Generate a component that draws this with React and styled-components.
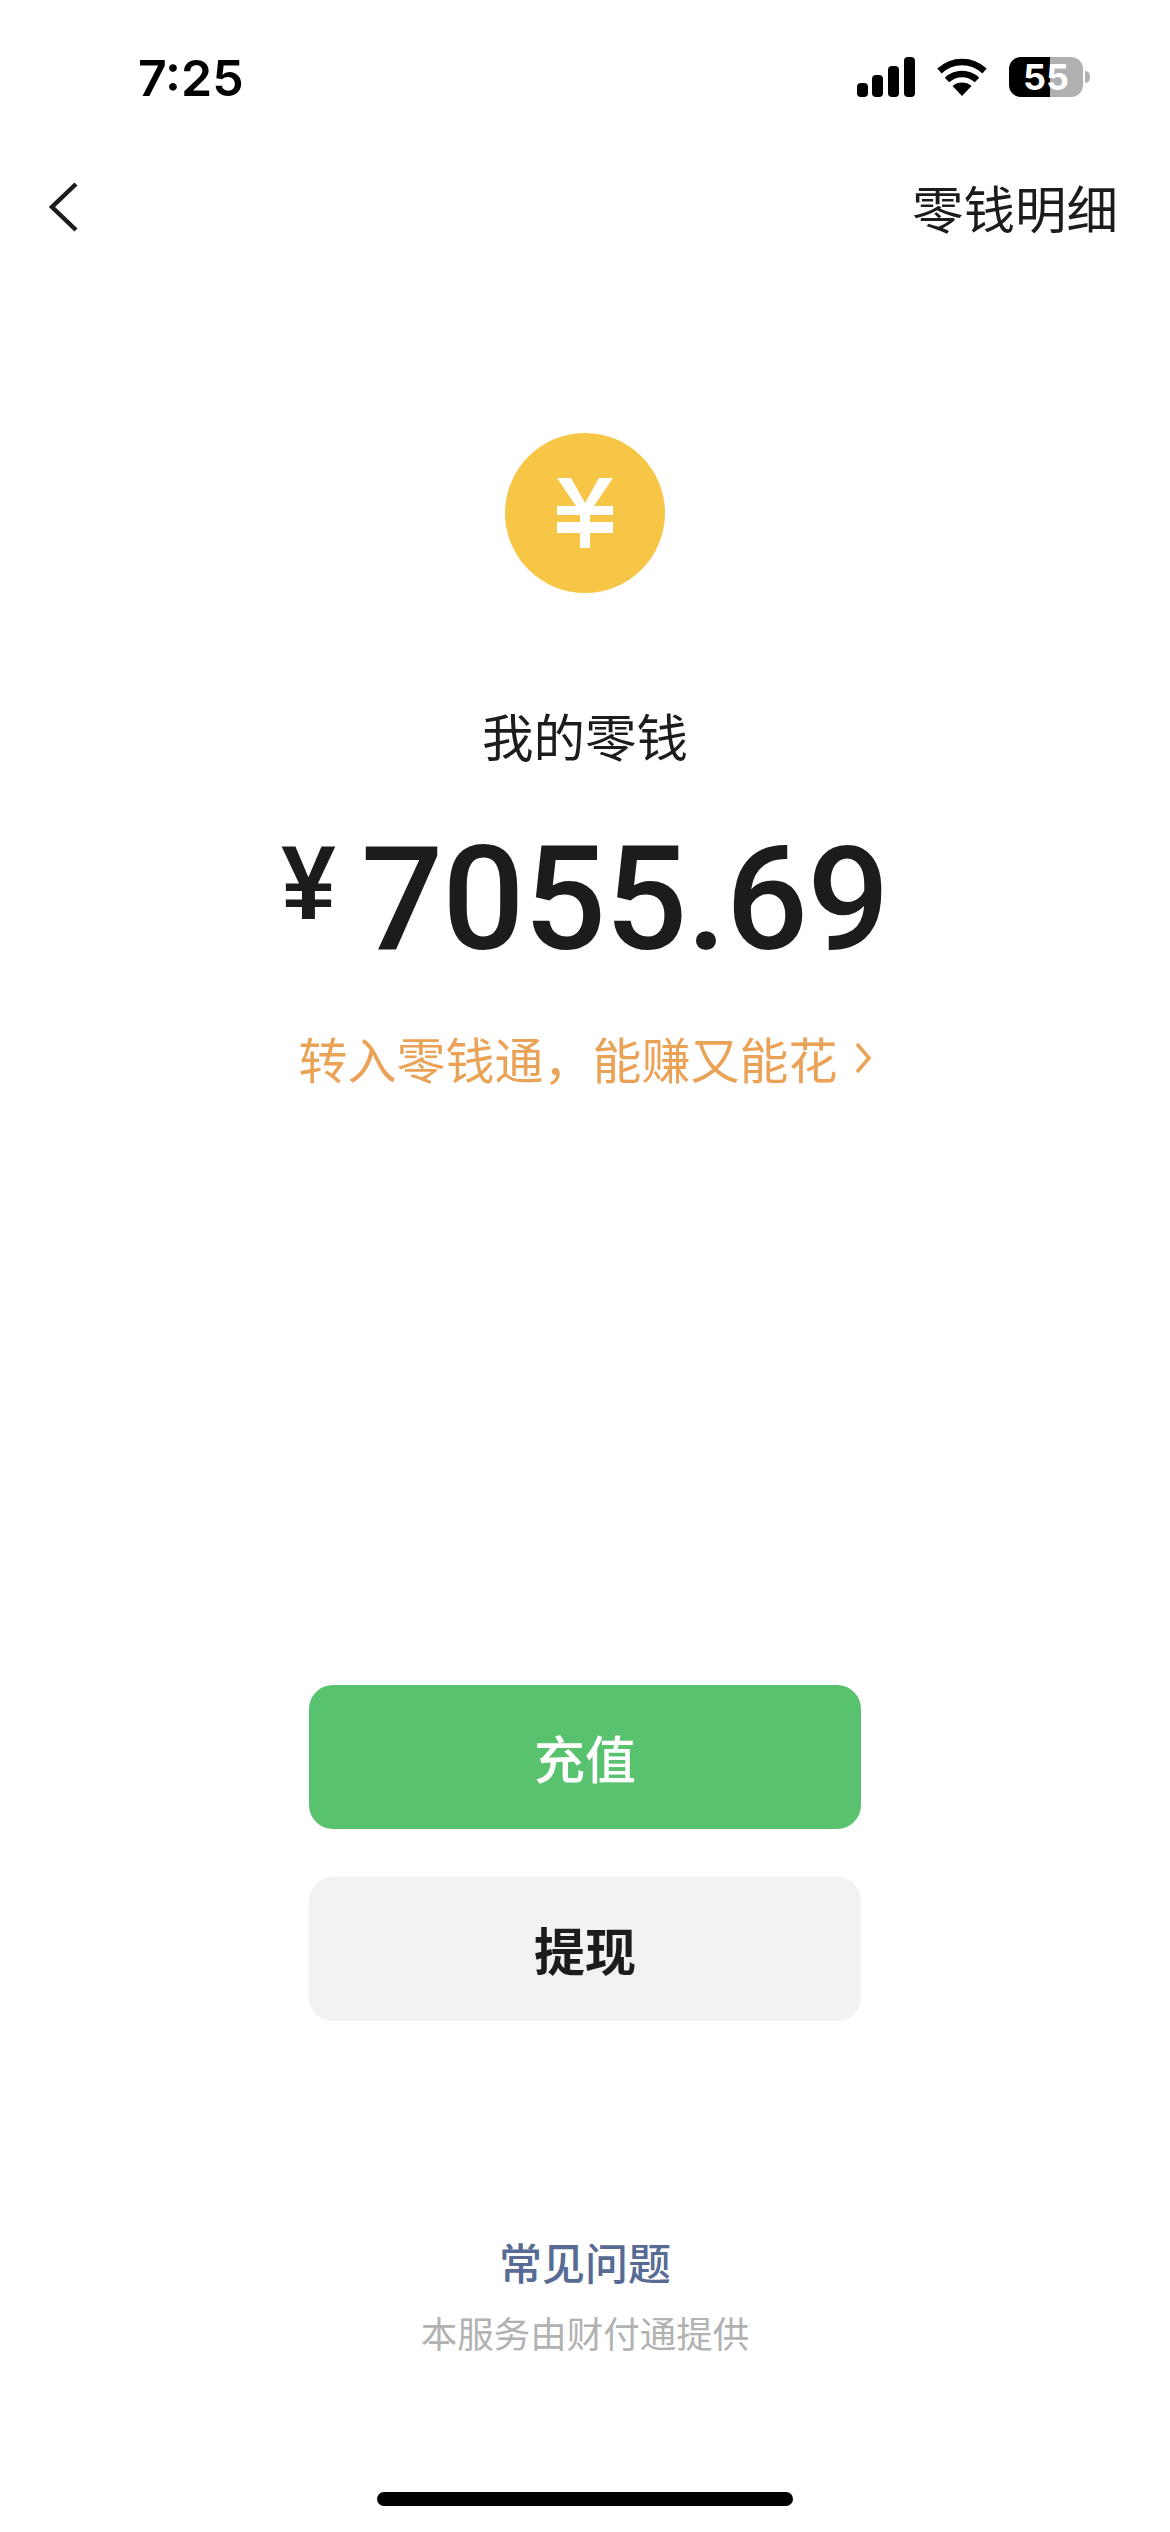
import React from 'react';
import styled, { createGlobalStyle } from 'styled-components';

const GlobalStyle = createGlobalStyle`
  html, body {
    margin: 0;
    padding: 0;
    background: #fff;
  }
  body {
    font-family: "Noto Sans CJK SC", "Liberation Sans", sans-serif;
  }
`;

const Page = styled.div`
  width: 1170px;
  height: 2532px;
  background: #fff;
  display: flex;
  flex-direction: column;
  align-items: center;
  overflow: hidden;
`;

// status bar
const StatusBar = styled.div`
  width: 100%;
  height: 130px;
  box-sizing: border-box;
  padding: 50px 80px 0 138px;
  display: flex;
  justify-content: space-between;
  align-items: flex-start;
`;

const Time = styled.span`
  font-family: Inter, sans-serif;
  font-size: 50px;
  font-weight: 600;
  line-height: 56px;
  color: #000;
`;

const StatusIcons = styled.div`
  display: flex;
  align-items: center;
  gap: 22px;
  margin-top: 7px;
`;

const Battery = styled.div`
  position: relative;
  width: 74px;
  height: 40px;
  border-radius: 12px;
  background: linear-gradient(90deg, #000 0 41px, #b0b0b0 41px);
  color: #fff;
  font-family: Inter, sans-serif;
  font-size: 36px;
  font-weight: 700;
  line-height: 40px;
  text-align: center;
  margin-right: 7px;

  &::after {
    content: '';
    position: absolute;
    right: -7px;
    top: 14px;
    width: 5px;
    height: 12px;
    border-radius: 0 6px 6px 0;
    background: #b0b0b0;
  }
`;

// nav
const NavBar = styled.div`
  width: 100%;
  height: 80px;
  box-sizing: border-box;
  padding: 0 52px 0 49px;
  display: flex;
  justify-content: space-between;
  align-items: center;
  margin-top: 37px;
`;

const NavLink = styled.span`
  font-size: 51.5px;
  line-height: 80px;
  color: #1c1c1c;
`;

const Coin = styled.div`
  width: 160px;
  height: 160px;
  border-radius: 50%;
  background: #f7c646;
  display: flex;
  align-items: center;
  justify-content: center;
  margin-top: 186px;
`;

const Title = styled.div`
  font-size: 51.5px;
  line-height: 72px;
  color: #1c1c1c;
  margin-top: 106px;
`;

const Amount = styled.div`
  display: flex;
  align-items: flex-start;
  color: #1c1c1c;
  margin-top: 53px;
  height: 150px;
`;

const Currency = styled.span`
  font-family: "Liberation Sans", sans-serif;
  font-size: 98px;
  font-weight: 700;
  line-height: 108px;
  margin-right: 25px;
  transform: scaleY(1.08);
  transform-origin: top;
`;

const Digits = styled.span`
  font-family: Roboto, sans-serif;
  font-size: 145px;
  font-weight: 500;
  line-height: 150px;
  letter-spacing: -1px;
`;

const Promo = styled.div`
  display: flex;
  align-items: center;
  gap: 16px;
  font-size: 49px;
  line-height: 70px;
  color: #eaa257;
  margin-top: 49px;
`;

const Button = styled.div`
  width: 552px;
  height: 144px;
  border-radius: 24px;
  display: flex;
  align-items: center;
  justify-content: center;
  font-size: 51px;
  font-weight: ${(props) => (props.primary ? 500 : 600)};
  background: ${(props) => (props.primary ? '#59c26e' : '#f2f2f2')};
  color: ${(props) => (props.primary ? '#fff' : '#1c1c1c')};
  margin-top: ${(props) => props.gap}px;
`;

const FaqLink = styled.div`
  font-size: 43px;
  font-weight: 500;
  line-height: 60px;
  color: #576b95;
  margin-top: 210px;
`;

const Provider = styled.div`
  font-size: 36.5px;
  line-height: 60px;
  color: #b2b2b2;
  margin-top: 12px;
`;

const HomeIndicator = styled.div`
  width: 416px;
  height: 14px;
  border-radius: 7px;
  background: #000;
  margin-top: 129px;
`;

const SignalIcon = () => (
  <svg width="58" height="40" viewBox="0 0 58 40">
    <rect x="0" y="26" width="11" height="14" rx="4" fill="#000" />
    <rect x="15" y="18" width="11" height="22" rx="4" fill="#000" />
    <rect x="31" y="9" width="11" height="31" rx="4" fill="#000" />
    <rect x="47" y="0" width="11" height="40" rx="4" fill="#000" />
  </svg>
);

const WifiIcon = () => (
  <svg width="50" height="38" viewBox="0 0 50 38">
    <path d="M25 38 L15.5 28 C20.8 23.4 29.2 23.4 34.5 28 Z" fill="#000" />
    <path d="M10 22 C18.5 14 31.5 14 40 22" fill="none" stroke="#000" strokeWidth="6.5" />
    <path d="M2.5 13 C15.5 1 34.5 1 47.5 13" fill="none" stroke="#000" strokeWidth="6.5" />
  </svg>
);

const BackIcon = () => (
  <svg width="30" height="52" viewBox="0 0 30 52">
    <path d="M27 3 L3 26 L27 49" fill="none" stroke="#1c1c1c" strokeWidth="4.5" />
  </svg>
);

const YenIcon = () => (
  <svg width="58" height="70" viewBox="0 0 58 70">
    <path d="M1 0 H15 L29 25 L43 0 H57 L38 28 H57 V37 H34 V44 H57 V55 H34 V70 H24 V55 H1 V44 H24 V37 H1 V28 H20 Z" fill="#fff" />
  </svg>
);

const ChevronIcon = () => (
  <svg width="18" height="34" viewBox="0 0 18 34">
    <path d="M3 3 L15 17 L3 31" fill="none" stroke="#eaa257" strokeWidth="3.5" />
  </svg>
);

const App = () => {
  return (
    <Page>
      <GlobalStyle />
      <StatusBar>
        <Time>7:25</Time>
        <StatusIcons>
          <SignalIcon />
          <WifiIcon />
          <Battery>55</Battery>
        </StatusIcons>
      </StatusBar>
      <NavBar>
        <BackIcon />
        <NavLink>零钱明细</NavLink>
      </NavBar>
      <Coin>
        <YenIcon />
      </Coin>
      <Title>我的零钱</Title>
      <Amount>
        <Currency>¥</Currency>
        <Digits>7055.69</Digits>
      </Amount>
      <Promo>
        转入零钱通，能赚又能花
        <ChevronIcon />
      </Promo>
      <Button primary gap={592}>充值</Button>
      <Button gap={48}>提现</Button>
      <FaqLink>常见问题</FaqLink>
      <Provider>本服务由财付通提供</Provider>
      <HomeIndicator />
    </Page>
  );
};

export default App;
